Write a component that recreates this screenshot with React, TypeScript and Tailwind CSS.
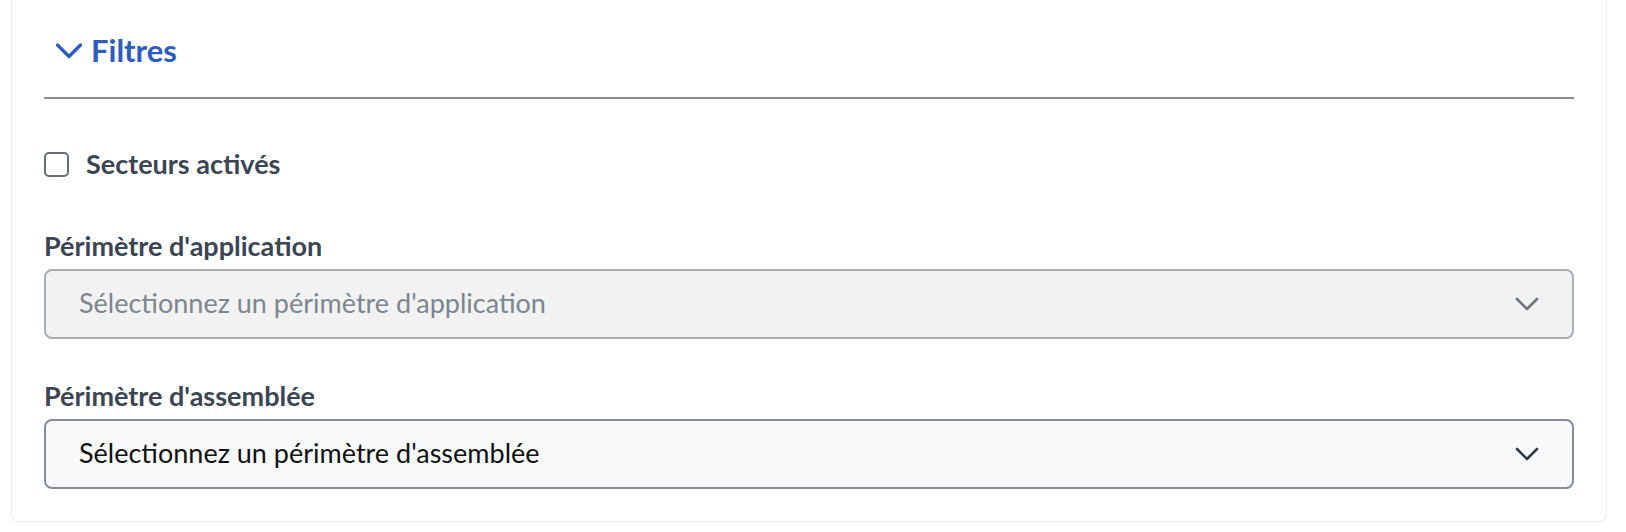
const FONT = "font-['Lato','Noto_Sans',sans-serif]";

function Chevron({ className }: { className: string }) {
  return (
    <svg width="24" height="14" viewBox="0 0 24 14" fill="none" className={className}>
      <path d="M2 2l10 10 10-10" stroke="currentColor" strokeWidth="2.6" strokeLinecap="round" strokeLinejoin="round" />
    </svg>
  );
}

function Select({ placeholder, disabled }: { placeholder: string; disabled?: boolean }) {
  return (
    <div
      className={
        disabled
          ? 'flex h-[70px] items-center justify-between rounded-lg border-2 border-[#a9adb4] bg-[#f2f2f2] pl-[33px] pr-[33px]'
          : 'flex h-[70px] items-center justify-between rounded-lg border-2 border-[#878c96] bg-[#f8f9fb] pl-[33px] pr-[33px]'
      }
    >
      <span className={disabled ? 'text-[27px] text-[#7d858f]' : 'text-[27px] text-[#111111]'}>{placeholder}</span>
      <Chevron className={disabled ? 'text-[#6e747d]' : 'text-[#353c47]'} />
    </div>
  );
}

export default function App() {
  return (
    <div className={`h-[532px] w-full overflow-hidden bg-white ${FONT}`}>
      <div className="ml-[11px] mr-[19px] rounded-b-lg border-x border-b border-[#ebebf0] px-[32px] pb-[32px]">
        {/* Header */}
        <div className="flex h-[97px] items-center gap-[8px] pl-[11px] pt-[4px]">
          <svg width="28" height="18" viewBox="0 0 28 18" fill="none" className="text-[#2d5cbd]">
            <path d="M2.5 3l11.5 11.5L25.5 3" stroke="currentColor" strokeWidth="3.4" strokeLinecap="round" strokeLinejoin="round" />
          </svg>
          <span className="text-[31px] font-bold text-[#2d5cbd]">Filtres</span>
        </div>
        <div className="h-[2px] bg-[#8b8e99]" />

        {/* Checkbox */}
        <label className="mt-[45px] flex items-center gap-[17px]">
          <span className="h-[25px] w-[25px] rounded-[5px] border-2 border-[#676c77] bg-white" />
          <span className="text-[27px] font-bold text-[#3c4553]">Secteurs activés</span>
        </label>

        {/* Fields */}
        <div className="mt-[46px]">
          <div className="h-[30px] text-[27px] font-bold leading-[30px] text-[#3c4553]">Périmètre d'application</div>
          <div className="mt-[8px]">
            <Select placeholder="Sélectionnez un périmètre d'application" disabled />
          </div>
        </div>
        <div className="mt-[42px]">
          <div className="h-[30px] text-[27px] font-bold leading-[30px] text-[#3c4553]">Périmètre d'assemblée</div>
          <div className="mt-[8px]">
            <Select placeholder="Sélectionnez un périmètre d'assemblée" />
          </div>
        </div>
      </div>
    </div>
  );
}
